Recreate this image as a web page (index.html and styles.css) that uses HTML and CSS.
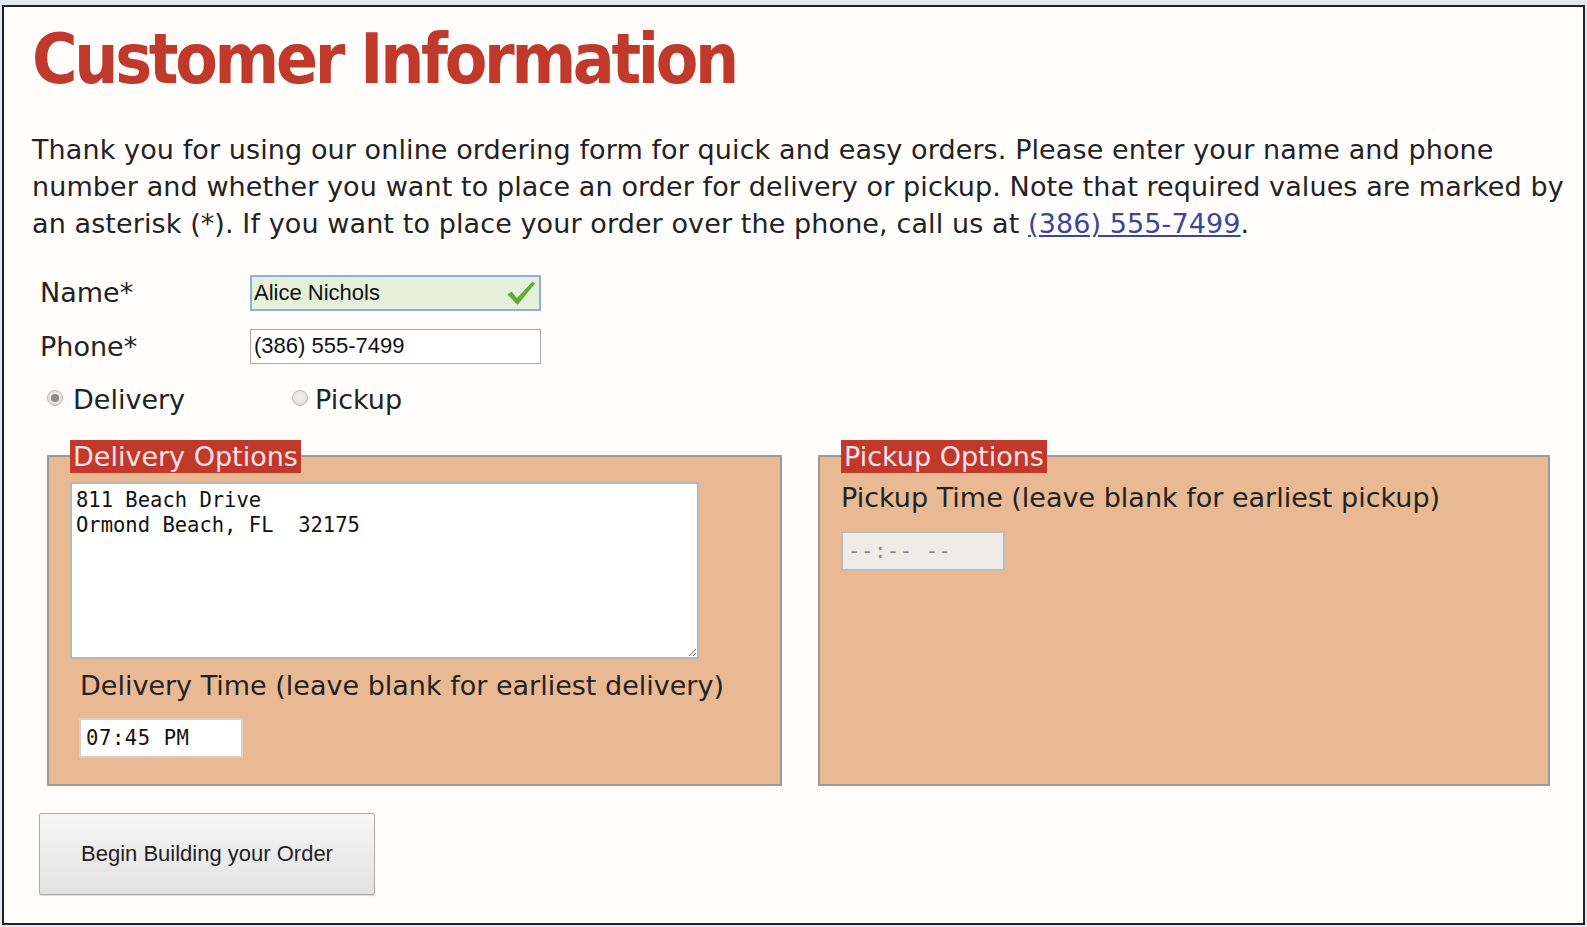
FILE: index.html
```html
<!DOCTYPE html>
<html lang="en">
<head>
<meta charset="utf-8">
<title>Customer Information</title>
<link rel="stylesheet" href="styles.css">
</head>
<body>
<div class="frame">
  <h1 class="title">Customer Information</h1>
  <p class="intro">Thank you for using our online ordering form for quick and easy orders. Please enter your name and phone number and whether you want to place an order for delivery or pickup. Note that required values are marked by an asterisk (*). If you want to place your order over the phone, call us at <a href="#" class="phone-link">(386) 555-7499</a>.</p>
  <form class="order-form">
    <div class="row">
      <label class="row-label" for="name">Name*</label>
      <div class="field valid">
        <input id="name" class="text-input" type="text" value="Alice Nichols">
        <svg class="check" viewBox="0 0 30 26" width="30" height="26" aria-hidden="true">
          <path d="M1.5 14.5 L5.5 11.5 L11 18 L26.5 1.5 L29 3.5 L11.5 25 Z" fill="#5aae34"/>
        </svg>
      </div>
    </div>
    <div class="row">
      <label class="row-label" for="phone">Phone*</label>
      <div class="field">
        <input id="phone" class="text-input" type="text" value="(386) 555-7499">
      </div>
    </div>
    <div class="radios">
      <label class="radio-item"><span class="radio checked"></span>Delivery</label>
      <label class="radio-item"><span class="radio"></span>Pickup</label>
    </div>
    <div class="options">
      <fieldset class="opt">
        <legend class="opt-legend">Delivery Options</legend>
        <textarea class="address">811 Beach Drive
Ormond Beach, FL  32175</textarea>
        <label class="time-label delivery-label">Delivery Time (leave blank for earliest delivery)</label>
        <input class="time-input" type="text" value="07:45 PM">
      </fieldset>
      <fieldset class="opt">
        <legend class="opt-legend">Pickup Options</legend>
        <label class="time-label">Pickup Time (leave blank for earliest pickup)</label>
        <input class="time-input disabled" type="text" value="--:-- --" disabled>
      </fieldset>
    </div>
    <button type="button" class="begin-btn">Begin Building your Order</button>
  </form>
</div>
</body>
</html>
```

FILE: styles.css
```css
html, body {
  margin: 0;
  padding: 0;
}
body {
  background: #e4e9ee;
  font-family: "DejaVu Sans", sans-serif;
  color: #222;
  padding: 5px 2px 2px 2px;
}
.frame {
  box-sizing: border-box;
  height: 920px;
  border: 2px solid #222;
  background: #fffdfc;
  padding: 0 10px 0 28px;
  display: flex;
  flex-direction: column;
}
.title {
  margin: 11px 0 0 0;
  font-family: "DejaVu Sans Condensed", "DejaVu Sans", sans-serif;
  font-size: 69px;
  line-height: 1.2;
  font-weight: bold;
  letter-spacing: -3.3px;
  color: #c0392b;
}
.intro {
  margin: 30px 0 0 0;
  font-size: 27px;
  line-height: 37px;
  letter-spacing: 0.1px;
  color: #222;
}
.phone-link {
  color: #3a4796;
}
.order-form {
  display: flex;
  flex-direction: column;
  margin-top: 33px;
}
.row {
  display: flex;
  align-items: center;
  margin-left: 8px;
  margin-bottom: 18px;
}
.row-label {
  width: 210px;
  font-size: 27px;
}
.field {
  position: relative;
  width: 291px;
}
.text-input {
  box-sizing: border-box;
  width: 291px;
  height: 35px;
  font-family: "Liberation Sans", Arial, sans-serif;
  font-size: 22px;
  color: #111;
  padding: 0 3px;
  border: 1px solid #a9a9a9;
  background: #fff;
  outline: none;
}
.valid .text-input {
  height: 36px;
  border: 2px solid #8eaedb;
  background: #e4f0d9;
  padding: 0 2px;
}
.check {
  position: absolute;
  right: 5px;
  top: 5px;
}
.radios {
  display: flex;
  margin-left: 15px;
  margin-top: 2px;
  font-size: 27px;
}
.radio-item {
  display: flex;
  align-items: center;
  width: 245px;
}
.radio-item:last-child {
  width: auto;
}
.radio {
  box-sizing: border-box;
  width: 16px;
  height: 16px;
  border-radius: 50%;
  border: 1px solid #b8b8b8;
  background: radial-gradient(circle at 50% 40%, #f4f4f4, #d6d6d6);
  margin-right: 10px;
  margin-top: -2px;
  position: relative;
}
.radio-item:last-child .radio {
  margin-right: 7px;
}
.radio.checked::after {
  content: "";
  position: absolute;
  left: 3px;
  top: 3px;
  width: 8px;
  height: 8px;
  border-radius: 50%;
  background: #8a8a8a;
}
.options {
  display: flex;
  gap: 36px;
  margin-top: 25px;
  margin-left: 15px;
  width: 1503px;
}
.opt {
  margin: 0;
  min-width: 0;
  border: 2px solid #9b9b9b;
  background: #e9b994;
  padding: 9px 21px 26px 21px;
  display: flex;
  flex-direction: column;
  align-items: flex-start;
  box-sizing: border-box;
}
.opt:first-child {
  flex: 0 0 735px;
}
.opt:last-child {
  flex: 0 0 732px;
}
.opt-legend {
  background: #c0392b;
  color: #fde3e6;
  font-size: 27px;
  line-height: 33px;
  padding: 0 3px;
}
.address {
  box-sizing: border-box;
  width: 629px;
  height: 177px;
  resize: vertical;
  font-family: "DejaVu Sans Mono", monospace;
  font-size: 20.5px;
  line-height: 25px;
  padding: 4px 4px;
  border: 2px solid #b8b8b8;
  background: #fff;
  color: #111;
  margin: 0;
}
.time-label {
  font-size: 27px;
  line-height: 32px;
  display: block;
}
.delivery-label {
  margin: 11px 0 0 10px;
}
.time-input {
  box-sizing: border-box;
  width: 164px;
  height: 40px;
  margin: 16px 0 0 0;
  font-family: "DejaVu Sans Mono", monospace;
  font-size: 20.5px;
  letter-spacing: 0.6px;
  padding: 0 5px;
  border: 2px solid #d8d0c8;
  background: #fff;
  color: #111;
}
.delivery-label + .time-input {
  margin-left: 9px;
}
.time-input.disabled {
  margin-top: 17px;
  background: #efece7;
  border-color: #bcbcbc;
  color: #888;
}
.begin-btn {
  align-self: flex-start;
  margin-top: 27px;
  margin-left: 7px;
  width: 336px;
  height: 82px;
  font-family: "Liberation Sans", Arial, sans-serif;
  font-size: 22px;
  color: #222;
  border: 1px solid #adadad;
  border-radius: 2px;
  background: linear-gradient(#f6f6f6, #e2e2e2);
  box-shadow: 0 1px 1px rgba(0,0,0,0.15);
}
```
